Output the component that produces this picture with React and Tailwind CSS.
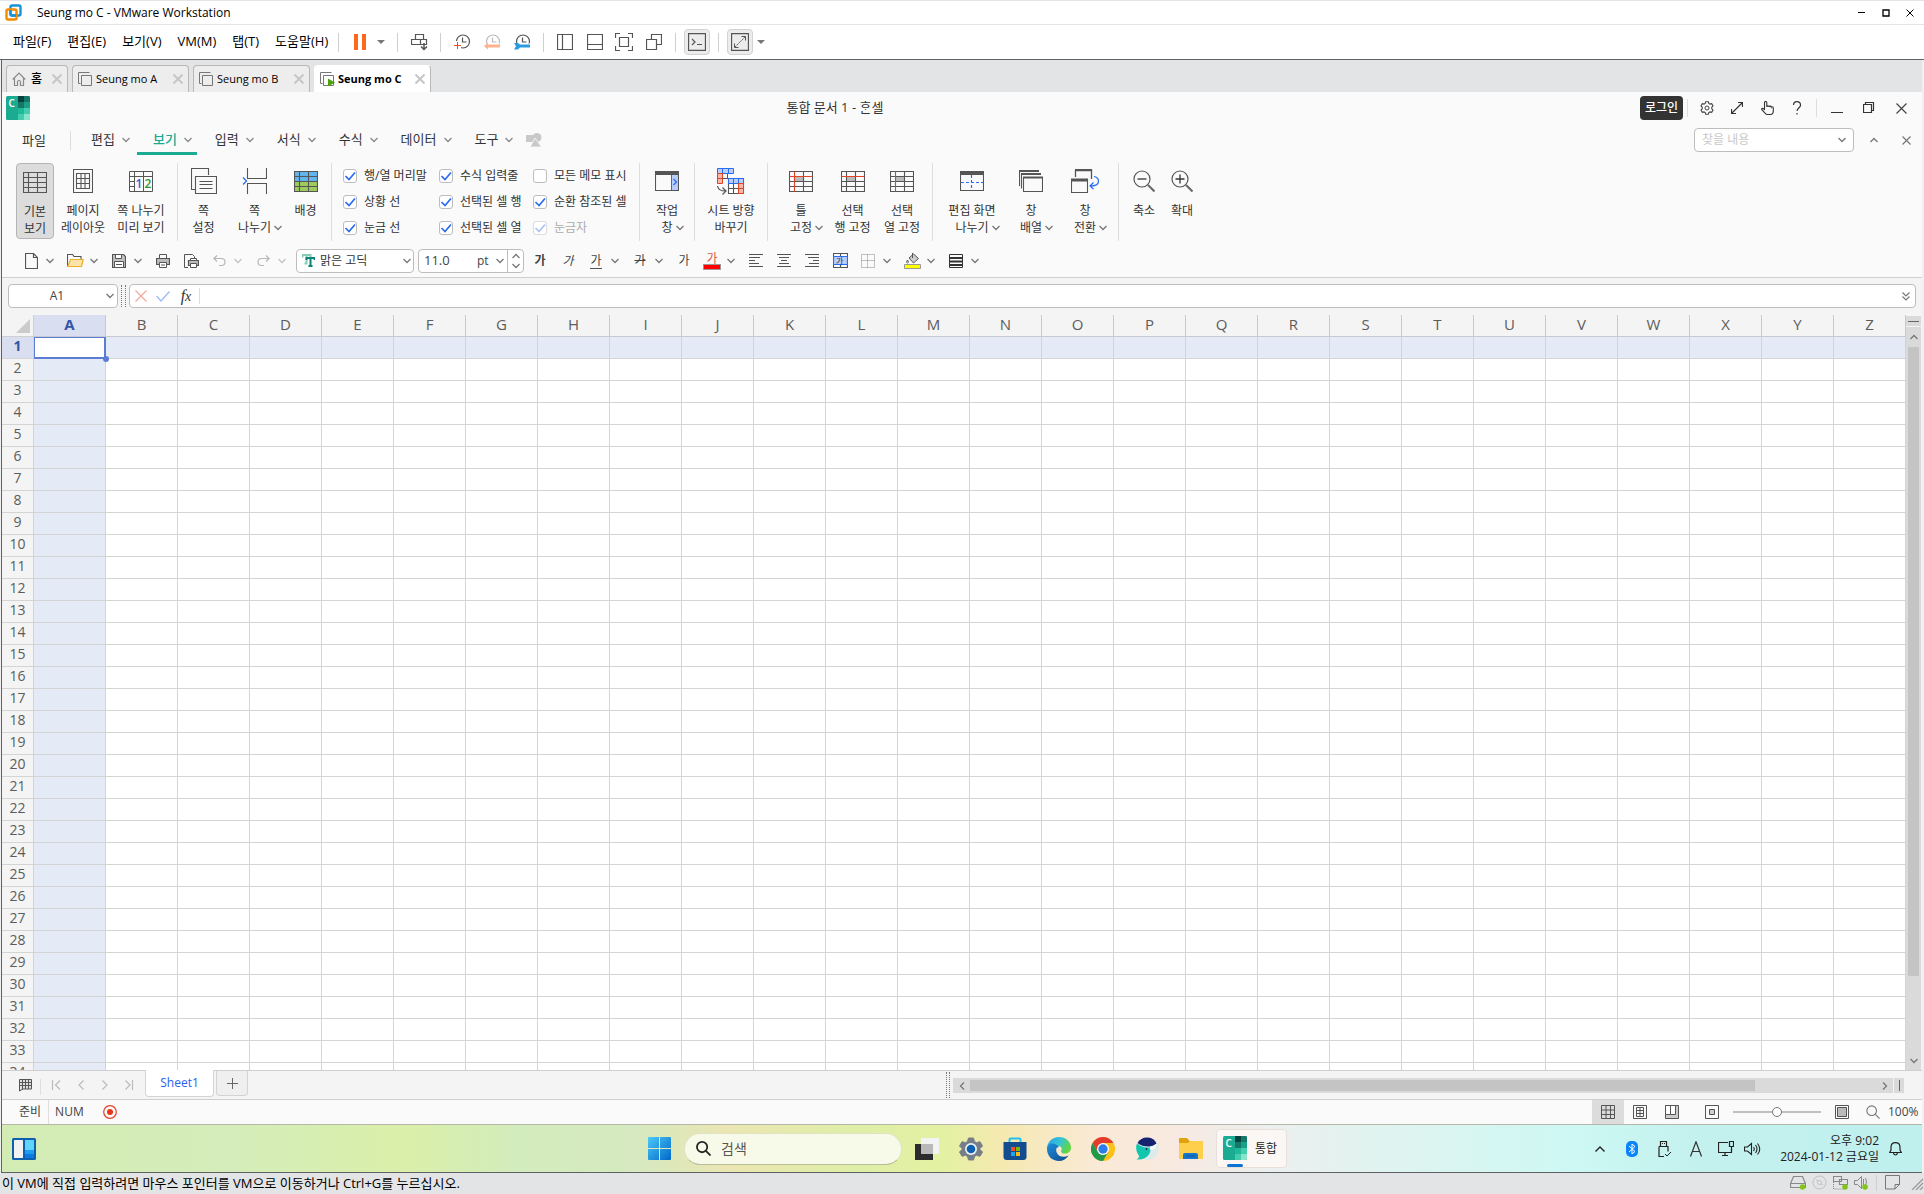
import { useState } from 'react';
import clsx from 'clsx';

const COLUMNS = 'ABCDEFGHIJKLMNOPQRSTUVWXYZ'.split('');
const ROWS = Array.from({ length: 34 }, (_, i) => i + 1);

/* ---------- shared bits ---------- */

const Svg = ({ w, h, className, children, stroke = '#555' }) => (
  <svg
    width={w}
    height={h}
    viewBox={`0 0 ${w} ${h}`}
    fill="none"
    stroke={stroke}
    className={clsx('shrink-0', className)}
    aria-hidden="true"
  >
    {children}
  </svg>
);

const Chevron = ({ className, up }) => (
  <svg width="10" height="8" viewBox="0 0 10 8" fill="none" stroke="currentColor" strokeWidth="1.3" className={clsx('shrink-0', className)} aria-hidden="true">
    <path d={up ? 'M1.5 6 5 2.5 8.5 6' : 'M1.5 2 5 5.5 8.5 2'} />
  </svg>
);

const Caret = () => (
  <Svg w={8} h={4} stroke="none"><path d="M0 0h8L4 4z" fill="#777" /></Svg>
);

const Cross = ({ size = 10, className, color = '#444', width = 1.2 }) => (
  <Svg w={size} h={size} className={className} stroke={color}>
    <path d={`M.5.5l${size - 1} ${size - 1}M${size - 0.5} .5l-${size - 1} ${size - 1}`} strokeWidth={width} />
  </Svg>
);

const Magnifier = ({ size = 16, color = '#777', width = 1.3 }) => (
  <svg width={size} height={size} viewBox="0 0 16 16" fill="none" stroke={color} strokeWidth={width} className="shrink-0" aria-hidden="true">
    <circle cx="6.5" cy="6.5" r="5.5" />
    <path d="m10.5 10.5 5 5" />
  </svg>
);

const CellLogo = () => (
  <Svg w={24} h={24} stroke="none">
    <rect width="24" height="24" rx="1.5" fill="#1bab90" />
    <path d="M12 0h6v6h-6z" fill="#08423f" />
    <path d="M18 0h4.500a1.500 1.500 0 0 1 1.500 1.500V6h-6zM12 6h6v6h-6z" fill="#147767" />
    <path d="M18 6h6v6h-6z" fill="#1b9f86" />
    <path d="M12 12h6v6h-6z" fill="#1fb898" />
    <path d="M18 12h6v6h-6zM12 18h6v6h-6z" fill="#42cdac" />
    <path d="M18 18h6v4.500a1.500 1.500 0 0 1-1.500 1.500H18z" fill="#8ce3cc" />
    <text x="2.500" y="11" fontSize="10" fontWeight="600" fill="#fff" fontFamily="Open Sans">C</text>
  </Svg>
);

/* ---------- workstation chrome ---------- */

const TitleBar = () => (
  <header className="flex h-[25px] shrink-0 items-center border-y border-[#e4e4e4] bg-white pl-[5px] pr-[10px]">
    <Svg w={17} h={17}>
      <rect x="5.500" y="1.500" width="10" height="10" rx="1.500" stroke="#1a93d6" strokeWidth="2.400" />
      <rect x="1.500" y="5.500" width="10" height="10" rx="1.500" stroke="#f38b00" strokeWidth="2.400" />
      <path d="M5.500 6v3.500q0 2 2 2H11" stroke="#1a93d6" strokeWidth="2.400" />
    </Svg>
    <h1 className="ml-[15px] flex-1 text-xs">Seung mo C - VMware Workstation</h1>
    <div className="flex items-center gap-4">
      <button type="button" aria-label="최소화" className="flex h-5 w-2 items-center"><Svg w={8} h={8} stroke="#000"><path d="M0 3.500h7" /></Svg></button>
      <button type="button" aria-label="최대화" className="flex h-5 w-2 items-center"><Svg w={8} h={8} stroke="#000"><path d="M1 1h6v6H1z" strokeWidth="1.300" /></Svg></button>
      <button type="button" aria-label="닫기" className="flex h-5 w-2 items-center"><Cross size={8} color="#000" width={1} /></button>
    </div>
  </header>
);

const Clock = ({ stroke }) => (
  <>
    <circle cx="9" cy="7.500" r="6.500" stroke={stroke} strokeWidth="1.200" />
    <path d="M8.500 3.500v4.500h4" stroke={stroke} strokeWidth="1.200" />
  </>
);

const Divider = ({ className }) => <span className={clsx('w-px bg-[#cfcfcf]', className)} />;

const ToolButton = ({ label, className, children }) => (
  <button type="button" aria-label={label} className={clsx('flex h-[26px] items-center justify-center', className)}>
    {children}
  </button>
);

const VmToolbar = () => (
  <nav className="flex h-[35px] shrink-0 items-center border-b border-[#5f6164] bg-white pl-[13px]">
    <div className="flex gap-4 text-[13px]">
      {['파일(F)', '편집(E)', '보기(V)', 'VM(M)', '탭(T)', '도움말(H)'].map((m) => (
        <button type="button" key={m}>{m}</button>
      ))}
    </div>
    <Divider className="ml-[10px] h-[19px]" />
    <ToolButton label="일시 중지" className="ml-[14px] w-[14px]">
      <Svg w={13} h={16} stroke="none"><path d="M0 0h4v16H0zM8 0h4v16H8z" fill="#ff6a1a" /></Svg>
    </ToolButton>
    <ToolButton label="전원 메뉴" className="ml-[10px] w-2"><Caret /></ToolButton>
    <Divider className="ml-3 h-[19px]" />
    <ToolButton label="Ctrl+Alt+Del 보내기" className="ml-[13px] w-4">
      <Svg w={17} h={17}><path d="M4.500.500h8v5h-8zM.500 5.500h9v5h-9zM9.500 5.500h6v5h-6z" strokeWidth="1.200" /><path d="M13 9v6M10 12.500l3 3 3-3" strokeWidth="1.500" /></Svg>
    </ToolButton>
    <Divider className="ml-[13px] h-[19px]" />
    <ToolButton label="스냅샷 만들기" className="ml-3 w-[18px]">
      <Svg w={17} h={16}><Clock stroke="#555" /><path d="M0 7h7v9H0z" fill="#fff" stroke="none" /><path d="M3.500 8v7M0 11.500h7" stroke="#e8501f" /></Svg>
    </ToolButton>
    <ToolButton label="스냅샷 되돌리기" className="ml-3 w-[18px]">
      <Svg w={17} h={16}><Clock stroke="#bbb" /><path d="M0 9.500h17V16H0z" fill="#fff" stroke="none" /><path d="M0 12 4 8.500v2h12v3H4v2z" fill="#ffb28e" stroke="none" /></Svg>
    </ToolButton>
    <ToolButton label="스냅샷 관리자" className="ml-3 w-[18px]">
      <Svg w={17} h={16}><Clock stroke="#555" /><path d="M0 9.500h17V16H0z" fill="#fff" stroke="none" /><path d="M0 9h4l2 1.500h10v3H6L4 15.500H0l2-3.200z" fill="#2a9be0" stroke="none" /></Svg>
    </ToolButton>
    <Divider className="ml-3 h-[19px]" />
    <ToolButton label="라이브러리" className="ml-[13px] w-4"><Svg w={16} h={16}><path d="M.500.500h15v15H.500zM5.500.500v15" strokeWidth="1.200" /></Svg></ToolButton>
    <ToolButton label="썸네일 바" className="ml-[14px] w-4"><Svg w={16} h={16}><path d="M.500.500h15v15H.500zM.500 10.500h15" strokeWidth="1.200" /></Svg></ToolButton>
    <ToolButton label="전체 화면" className="ml-3 w-[18px]"><Svg w={18} h={18}><path d="M.500 5V.500H5M13 .500h4.500V5M17.500 13v4.500H13M5 17.500H.500V13M4.500 4.500h9v9h-9z" strokeWidth="1.200" /></Svg></ToolButton>
    <ToolButton label="유니티" className="ml-3 w-[18px]"><Svg w={16} h={16}><path d="M5.500 5V.500h10v10H11M.500 5.500h10v10H.500z" strokeWidth="1.200" /></Svg></ToolButton>
    <Divider className="ml-3 h-[19px]" />
    <ToolButton label="콘솔" className="ml-2 w-[26px] rounded border border-[#d2d2d2] bg-[#ececed]">
      <Svg w={18} h={18}><path d="M.500.500h17v17H.500z" strokeWidth="1.300" /><path d="M4 6l3 3-3 3M9 11.500h5" strokeWidth="1.200" /></Svg>
    </ToolButton>
    <Divider className="ml-2 h-[19px]" />
    <ToolButton label="화면 맞춤" className="ml-2 w-[26px] rounded border border-[#d2d2d2] bg-[#ececed]">
      <Svg w={18} h={18}><path d="M.500.500h17v17H.500z" strokeWidth="1.300" /><path d="M10.500 3.500h4v4M3.500 10.500v4h4" /><path d="m4 14 10-10" strokeDasharray="2 1" /></Svg>
    </ToolButton>
    <ToolButton label="화면 맞춤 메뉴" className="ml-1 w-2"><Caret /></ToolButton>
  </nav>
);

const VmGlyph = ({ running }) => (
  <Svg w={15} h={14} stroke="#777">
    <path d="M11.500.500h-11v11h2M3.500 3.500h10v10h-10z" />
    {running && <path d="M8 6.500v8l7-4z" fill="#4ca30d" stroke="none" />}
  </Svg>
);

const VmTab = ({ name, active }) => (
  <div
    className={clsx(
      'flex h-[27px] w-[117px] items-center rounded-t border border-b-0 px-[5px] text-[11px]',
      active ? 'border-white border-r-[#b8b8b8] bg-white font-bold' : 'border-[#b8b8b8] bg-[#ededee]'
    )}
  >
    <VmGlyph running={active} />
    <span className="ml-[3px] flex-1 whitespace-nowrap">{name}</span>
    <button type="button" aria-label={`${name} 닫기`}><Cross size={10} color="#c6c6c6" width={2} /></button>
  </div>
);

const VmTabs = () => (
  <div className="flex h-8 shrink-0 items-end gap-1 bg-[#e3e4e6] pl-1">
    <div className="flex h-[27px] w-[62px] items-center rounded-t border border-b-0 border-[#b8b8b8] bg-[#ededee] px-[5px] text-xs font-medium">
      <Svg w={14} h={14} stroke="#888"><path d="M.700 7.500 7 1l6.300 6.500M2.500 6.500v7h3v-4q1.500-2.500 3 0v4h3v-7" strokeWidth="1.200" /></Svg>
      <span className="ml-[5px] flex-1">홈</span>
      <button type="button" aria-label="홈 닫기"><Cross size={10} color="#c6c6c6" width={2} /></button>
    </div>
    <VmTab name="Seung mo A" />
    <VmTab name="Seung mo B" />
    <VmTab name="Seung mo C" active />
  </div>
);

/* ---------- spreadsheet header ---------- */

const AppTitle = () => (
  <div className="flex h-8 shrink-0 items-center pl-1 pr-[5px]">
    <CellLogo />
    <h2 className="flex-1 text-center text-[13px] text-[#333]">통합 문서 1 - {'\u1112\u119e\u11ab'}셀</h2>
    <button type="button" className="h-6 rounded bg-[#333] px-[5px] text-xs font-medium text-white">로그인</button>
    <Divider className="ml-1 h-[18px] bg-[#dedede]" />
    <div className="ml-1 flex">
      <ToolButton label="설정" className="w-[30px]">
        <Svg w={14} h={14} stroke="#444">
          <path d="M5.700.700h2.600l.5 1.700 1.200.7 1.700-.4 1.300 2.200-1.200 1.300v1.600l1.200 1.300-1.300 2.200-1.700-.4-1.200.7-.5 1.700H5.700l-.5-1.700-1.200-.7-1.700.4L1 9.100l1.200-1.300V6.200L1 4.900l1.300-2.200 1.700.4 1.200-.7z" strokeWidth="1.100" />
          <circle cx="7" cy="7" r="2" />
        </Svg>
      </ToolButton>
      <ToolButton label="전체 화면" className="w-[30px]"><Svg w={12} h={12} stroke="#333"><path d="M.500 11.500l11-11M7 .500h4.500V5M.500 7v4.500H5" strokeWidth="1.200" /></Svg></ToolButton>
      <ToolButton label="터치 모드" className="w-[30px]"><Svg w={13} h={14} stroke="#333"><path d="M3.500 9V1.800q0-1.300 1.100-1.300t1.200 1.300V6q.2-1.200 1.200-1.100 1 0 1.100 1 .2-.8 1.100-.8t1.100 1q.2-.5 1-.4 1 .1 1 1.200V10q0 3.500-3 3.500H6.500Q5 13.500 4 12L.700 8.500q-.3-1 .8-1.200Q2.600 7.300 3.500 9" strokeWidth="1.100" /></Svg></ToolButton>
      <ToolButton label="도움말" className="w-[30px]"><Svg w={10} h={14} stroke="#333"><path d="M1.500 4Q1.600.700 5 .700T8.500 4Q8.500 5.500 7 6.700T5 9.800M5 12v1.500" strokeWidth="1.200" /></Svg></ToolButton>
    </div>
    <Divider className="ml-1 h-[18px] bg-[#dedede]" />
    <div className="ml-1 flex">
      <ToolButton label="최소화" className="w-8"><Svg w={12} h={12} stroke="#333"><path d="M0 10.500h12" /></Svg></ToolButton>
      <ToolButton label="이전 크기로" className="w-8"><Svg w={12} h={12} stroke="#333"><path d="M.500 2.500h8v8h-8zM2.500 2.500v-2h8v8h-2" strokeWidth="1.200" /></Svg></ToolButton>
      <ToolButton label="닫기" className="w-8"><Cross size={11} /></ToolButton>
    </div>
  </div>
);

const MenuBar = () => (
  <div className="flex h-8 shrink-0 items-center pl-5 text-[13px] text-[#333]">
    <button type="button" className="w-12 pt-px text-left">파일</button>
    <Divider className="mr-1 h-[19px] bg-[#dedede]" />
    <div className="flex gap-[2px] self-stretch">
      {['편집', '보기', '입력', '서식', '수식', '데이터', '도구'].map((m) => (
        <button
          type="button"
          key={m}
          className={clsx(
            'flex h-[31px] items-center gap-1.5 border-b-[3px] pl-4 pr-1 pt-1',
            m === '보기' ? 'border-[#1bab90] font-medium text-[#1bab90]' : 'border-transparent'
          )}
        >
          {m}
          <Chevron className="text-[#888]" />
        </button>
      ))}
    </div>
    <Svg w={16} h={14} className="ml-2" stroke="none">
      <path d="M0 2h7v7H0z" fill="#c9c9c9" /><circle cx="11" cy="4.500" r="4.500" fill="#c9c9c9" /><path d="M9 5l6.500 9H4z" fill="#c9c9c9" stroke="#fafafa" strokeWidth=".8" />
    </Svg>
    <label className="ml-auto flex h-6 w-[160px] items-center rounded border border-[#bdbdbd] bg-white pr-1.5">
      <input type="text" aria-label="찾을 내용" placeholder="찾을 내용" className="min-w-0 flex-1 pl-[7px] text-xs outline-none placeholder:text-[#c8c8c8]" />
      <Chevron className="text-[#777]" />
    </label>
    <ToolButton label="리본 접기" className="ml-1 w-8 text-[#777]"><Chevron up /></ToolButton>
    <ToolButton label="문서 닫기" className="w-8"><Cross size={9} color="#777" /></ToolButton>
  </div>
);

/* ---------- ribbon ---------- */

const GridLines = ({ head = 'none', body = 'none' }) => (
  <>
    <path d="M.500.500h23v10H.500z" fill={head} stroke="none" />
    <path d="M.500 10.500h23v10H.500z" fill={body} stroke="none" />
    <path d="M.500.500h23v20H.500zM5.500.500v20M14.500.500v20M.500 5.500h23M.500 10.500h23M.500 15.500h23" strokeWidth="1.100" />
  </>
);

const NormalIcon = () => <Svg w={24} h={21}><GridLines /></Svg>;
const BackgroundIcon = () => <Svg w={24} h={21}><GridLines head="#63b5ee" body="#9dcb5c" /></Svg>;

const FreezeIcon = ({ row, col }) => (
  <Svg w={24} h={21}>
    <path d="M5.500 5.500h9v5h-9z" fill="#bbb" stroke="none" />
    <GridLines />
    {row && <path d="M.500 5.500h23" stroke="#e04326" />}
    {col && <path d="M5.500.500v20" stroke="#e04326" />}
  </Svg>
);

const PageLayoutIcon = () => (
  <Svg w={20} h={24}><path d="M.500.500h19v23H.500zM3.500 4.500h13v15h-13zM8 4.500v15M12 4.500v15M3.500 9.500h13M3.500 14.500h13" strokeWidth="1.100" /></Svg>
);

const PageBreakIcon = () => (
  <Svg w={24} h={21}>
    <path d="M.500.500h23v20H.500zM5.500.500v20M14.500.500v20M.500 5.500h23M.500 10.500h5M.500 15.500h5" />
    <path d="M6 6h8v14H6zM15 6h8v14h-8z" fill="#fafafa" stroke="none" />
    <text x="6.500" y="17" fontSize="12" fill="#2a62e0" stroke="none" fontFamily="Open Sans" fontWeight="600">1</text>
    <text x="15.500" y="17" fontSize="12" fill="#2b9a2b" stroke="none" fontFamily="Open Sans" fontWeight="600">2</text>
  </Svg>
);

const PageSetupIcon = () => (
  <Svg w={26} h={26}><path d="M4 21.500H.500V.500h17V7M4.500 8.500h21v17h-21zM8.500 13.500h13M8.500 16.500h13M8.500 20.500h13" strokeWidth="1.100" /></Svg>
);

const SplitPageIcon = () => (
  <Svg w={25} h={26}><path d="M5.500 0v10.500h19V0M5.500 26V15.500h19V26" strokeWidth="1.100" /><path d="m1 9.500 3.500 3.500L1 16.500" stroke="#2a6cf0" strokeWidth="1.300" /></Svg>
);

const TaskPaneIcon = () => (
  <Svg w={24} h={20}>
    <path d="M16 4h7.500v15.500H16z" fill="#b9cdf8" stroke="none" /><path d="M.500 2.500h23v17H.500z" strokeWidth="1.100" /><path d="M0 2h24" strokeWidth="4" />
    <path d="M16.500 4v15" stroke="#2a6cf0" /><path d="m18.500 8 3 3-3 3" stroke="#2a6cf0" strokeWidth="1.300" />
  </Svg>
);

const SheetDirectionIcon = () => (
  <Svg w={28} h={27}>
    <path d="M.500.500h16v5H.500z" fill="#b9cdf8" stroke="#2a6cf0" /><path d="M5.500.500v5M11.500.500v5" stroke="#2a6cf0" />
    <path d="M.500 5.500h5v10h-5zM.500 10.500h5" fill="#f5b8ab" stroke="#e04326" />
    <path d="M5.500 10.500h5M10.500 6v5" />
    <path d="M11.500 10.500h15v15h-15zM16.500 15v11M11.500 20.500h15" fill="#fff" strokeWidth="1.100" />
    <path d="M11.500 10.500h15v5h-15z" fill="#b9cdf8" stroke="#2a6cf0" /><path d="M16.500 10.500v5M21.500 10.500v5" stroke="#2a6cf0" />
    <path d="M21.500 15.500h5v10h-5zM21.500 20.500h5" fill="#f5b8ab" stroke="#e04326" />
    <path d="M.500 18q1 5 8 5M5.500 19.500l3.500 3.500-3.500 3.500" strokeWidth="1.200" />
  </Svg>
);

const SplitViewIcon = () => (
  <Svg w={24} h={20}><path d="M.500 2.500h23v17H.500z" strokeWidth="1.100" /><path d="M0 2h24" strokeWidth="4" /><path d="M11.500 4v15M1 11.500h22" stroke="#2a6cf0" strokeDasharray="3 2" strokeWidth="1.200" /></Svg>
);

const ArrangeIcon = () => (
  <Svg w={24} h={22}><path d="M.500 16V.500H20M2.500 18.500V3.500h19M4.500 7.500h19v14h-19z" strokeWidth="1.100" /><path d="M0 1h20M2 4h20M4 7.500h20" strokeWidth="2" /></Svg>
);

const SwitchWindowIcon = () => (
  <Svg w={28} h={24}>
    <path d="M4.500 8V1M4 1h17M20.500 0v10" strokeWidth="1.300" /><path d="M4 1h17" strokeWidth="2.500" />
    <path d="M.500 10.500h16v13H.500z" strokeWidth="1.100" /><path d="M0 11h17" strokeWidth="3" />
    <path d="M23 7.500q4.500 1 4.500 4.500 0 5-8 5M22.500 13.500l-3.500 3.500 3.500 3" stroke="#2a6cf0" strokeWidth="1.200" />
  </Svg>
);

const ZoomIcon = ({ plus }) => (
  <Svg w={22} h={22}><circle cx="9" cy="9" r="8" strokeWidth="1.200" /><path d={plus ? 'M4.500 9h9M9 4.500v9' : 'M4.500 9h9'} stroke="#333" strokeWidth="1.300" /><path d="m15 15 6.500 6.500" stroke="#666" strokeWidth="2" /></Svg>
);

const RibbonButton = ({ icon, lines, menu, active, className }) => (
  <button
    type="button"
    className={clsx('flex h-[76px] shrink-0 flex-col items-center rounded pt-1 text-xs/[17px] text-[#333]', active && 'border border-[#b5b5b5] bg-[#dcdcdc]', className)}
  >
    <span className="flex h-7 shrink-0 items-center">{icon}</span>
    <span className="mt-[7px] whitespace-nowrap">{lines[0]}</span>
    {lines[1] && (
      <span className={clsx('flex items-center whitespace-nowrap', menu && 'pl-3')}>
        {lines[1]}
        {menu && <Chevron className="ml-[2px] text-[#777]" />}
      </span>
    )}
  </button>
);

const CheckItem = ({ label, defaultChecked = true, disabled }) => (
  <label className={clsx('flex items-center gap-[7px] whitespace-nowrap text-xs', disabled ? 'text-[#ababab]' : 'text-[#333]')}>
    <span className="grid">
      <input
        type="checkbox"
        defaultChecked={defaultChecked}
        disabled={disabled}
        className="peer col-start-1 row-start-1 h-[14px] w-[14px] appearance-none rounded-[3px] border border-[#bdbdbd] bg-white disabled:border-[#dcdcdc]"
      />
      <Svg w={14} h={14} stroke={disabled ? '#a9c2f5' : '#2a6cf0'} className="pointer-events-none invisible col-start-1 row-start-1 peer-checked:visible">
        <path d="m2.500 7 3.500 3.500 6-7" strokeWidth="1.700" />
      </Svg>
    </span>
    {label}
  </label>
);

const RibbonDivider = ({ className }) => <Divider className={clsx('h-[78px] shrink-0 bg-[#dedede]', className)} />;

const Ribbon = () => (
  <div className="flex h-[88px] shrink-0 items-start overflow-hidden pl-[14px] pt-[7px]">
    <RibbonButton icon={<NormalIcon />} lines={['기본', '보기']} active className="w-[38px]" />
    <RibbonButton icon={<PageLayoutIcon />} lines={['페이지', '레이아웃']} className="w-[58px]" />
    <RibbonButton icon={<PageBreakIcon />} lines={['쪽 나누기', '미리 보기']} className="w-[58px]" />
    <RibbonDivider className="ml-[7px]" />
    <RibbonButton icon={<PageSetupIcon />} lines={['쪽', '설정']} className="w-[51px]" />
    <RibbonButton icon={<SplitPageIcon />} lines={['쪽', '나누기']} menu className="w-[51px]" />
    <RibbonButton icon={<BackgroundIcon />} lines={['배경']} className="w-[51px]" />
    <RibbonDivider />
    <div className="grid h-[78px] shrink-0 grid-cols-[96px_94px_106px] pl-[11px]">
      <CheckItem label="행/열 머리말" />
      <CheckItem label="수식 입력줄" />
      <CheckItem label="모든 메모 표시" defaultChecked={false} />
      <CheckItem label="상황 선" />
      <CheckItem label="선택된 셀 행" />
      <CheckItem label="순환 참조된 셀" />
      <CheckItem label="눈금 선" />
      <CheckItem label="선택된 셀 열" />
      <CheckItem label="눈금자" disabled />
    </div>
    <RibbonDivider />
    <RibbonButton icon={<TaskPaneIcon />} lines={['작업', '창']} menu className="w-[54px]" />
    <RibbonDivider />
    <RibbonButton icon={<SheetDirectionIcon />} lines={['시트 방향', '바꾸기']} className="w-[72px]" />
    <RibbonDivider />
    <RibbonButton icon={<FreezeIcon row col />} lines={['틀', '고정']} menu className="ml-[7px] w-[52px]" />
    <RibbonButton icon={<FreezeIcon row />} lines={['선택', '행 고정']} className="w-[51px]" />
    <RibbonButton icon={<FreezeIcon col />} lines={['선택', '열 고정']} className="w-[48px]" />
    <RibbonDivider className="ml-[6px]" />
    <RibbonButton icon={<SplitViewIcon />} lines={['편집 화면', '나누기']} menu className="ml-[7px] w-[64px]" />
    <RibbonButton icon={<ArrangeIcon />} lines={['창', '배열']} menu className="w-[54px]" />
    <RibbonButton icon={<SwitchWindowIcon />} lines={['창', '전환']} menu className="w-[54px]" />
    <RibbonDivider className="ml-[6px]" />
    <RibbonButton icon={<ZoomIcon />} lines={['축소']} className="ml-[6px] w-[38px]" />
    <RibbonButton icon={<ZoomIcon plus />} lines={['확대']} className="w-[38px]" />
  </div>
);

/* ---------- formatting bar ---------- */

const Quick = ({ label, menu, faded, children }) => (
  <div className={clsx('flex shrink-0 items-center', faded && 'opacity-40')}>
    <ToolButton label={label} className="w-7">{children}</ToolButton>
    {menu && (
      <ToolButton label={`${label} 메뉴`} className="w-4 text-[#777]"><Chevron className="mr-auto" /></ToolButton>
    )}
  </div>
);

const AlignIcon = ({ d }) => <Svg w={14} h={14}><path d={d} strokeWidth="1.100" /></Svg>;

const FormatBar = () => (
  <div className="flex h-[34px] shrink-0 items-center overflow-hidden border-b border-[#cfcfcf] pl-[15px] text-xs text-[#444]">
    <Quick label="새 문서" menu><Svg w={13} h={16}><path d="M.500.500h8l4 4v11H.500zM8.500.500v4h4" strokeWidth="1.200" /></Svg></Quick>
    <Quick label="열기" menu>
      <Svg w={17} h={13}><path d="M.500 12V.500h5l1.500 2h7V6" strokeWidth="1.100" /><path d="M3.500 5.500h12.700l-1.700 7H.700z" fill="#fde3a7" stroke="#eab128" strokeWidth="1.200" /></Svg>
    </Quick>
    <Quick label="저장" menu>
      <Svg w={14} h={14}><path d="M.500.500h11l2 2v11H.500z" fill="#c2c2c2" strokeWidth="1.200" /><path d="M3.500.500h6v4h-6zM2.500 7.500h9v6h-9z" fill="#fff" /><path d="M4 10.500h6" /></Svg>
    </Quick>
    <Quick label="인쇄">
      <Svg w={14} h={14}><path d="M3.500 4V.500h7V4" /><path d="M.500 4.500h13v6H.500z" fill="#bbb" strokeWidth="1.200" /><path d="M3.500 8.500h7v5h-7z" fill="#fff" /><path d="M5 11h4" /></Svg>
    </Quick>
    <Quick label="미리 보기">
      <Svg w={15} h={14}><path d="M4 13.500H.500V.500h8l2 2V4" /><path d="M4.500 6.500h10v5h-10z" fill="#bbb" strokeWidth="1.200" /><path d="M6.500 4.500h6v2h-6zM6.500 9.500h6v4h-6z" fill="#fff" /></Svg>
    </Quick>
    <Quick label="되돌리기" menu faded><Svg w={13} h={12}><path d="M4 .500.800 3.500 4 6.500M1 3.500h7.500q3.500 0 3.500 3.500t-3.500 3.500H6" strokeWidth="1.200" /></Svg></Quick>
    <Quick label="다시 실행" menu faded><Svg w={13} h={12}><path d="m9 .500 3.200 3L9 6.500M12 3.500H4.500Q1 3.500 1 7t3.500 3.500H7" strokeWidth="1.200" /></Svg></Quick>
    <label className="ml-[3px] flex h-6 w-[118px] shrink-0 items-center rounded border border-[#bdbdbd] bg-white px-[5px]">
      <Svg w={13} h={13}><path d="M.500 3.500V1h8v2.500M4.500 1v8M2.500 9.500h3" stroke="#85cdb8" strokeWidth="2" /><path d="M4.500 6V4h8v2M8.500 4v8M6.500 12h4" stroke="#0c8378" strokeWidth="2" /></Svg>
      <select aria-label="글꼴" className="min-w-0 flex-1 appearance-none pl-[5px] text-[#333] outline-none">
        <option>맑은 고딕</option>
      </select>
      <Chevron className="-mr-1 text-[#777]" />
    </label>
    <div className="ml-1 mr-[2px] flex h-6 w-[106px] shrink-0 items-center rounded border border-[#bdbdbd] bg-white">
      <input type="text" aria-label="글자 크기" defaultValue="11.0" className="w-[58px] pl-[5px] text-[13px] outline-none" />
      <span className="flex-1">pt</span>
      <Chevron className="mr-[2px] text-[#777]" />
      <span className="flex h-full w-4 flex-col items-center justify-between border-l border-[#bdbdbd] py-[2px] text-[#777]">
        <Chevron up />
        <Chevron />
      </span>
    </div>
    <Quick label="진하게"><b>가</b></Quick>
    <Quick label="기울임"><i>가</i></Quick>
    <Quick label="밑줄" menu><span className="border-b border-[#555] leading-[15px]">가</span></Quick>
    <Quick label="취소선" menu><s>가</s></Quick>
    <Quick label="글자 모양">가</Quick>
    <Quick label="글자 색" menu>
      <span className="flex flex-col items-center leading-[12px] text-[#e0523a]">가<span className="h-1 w-4 bg-[#f00] outline-1 outline-[#999]" /></span>
    </Quick>
    <Quick label="왼쪽 정렬"><AlignIcon d="M0 .500h14M0 3.500h11M0 6.500h6M0 9.500h10M0 12.500h14" /></Quick>
    <Quick label="가운데 정렬"><AlignIcon d="M0 .500h14M2 3.500h10M4 6.500h6M2 9.500h10M0 12.500h14" /></Quick>
    <Quick label="오른쪽 정렬"><AlignIcon d="M0 .500h14M3 3.500h11M8 6.500h6M4 9.500h10M0 12.500h14" /></Quick>
    <Quick label="병합하고 가운데 맞춤">
      <Svg w={15} h={15}>
        <path d="M.500.500h14v14H.500zM7.500.500v14" strokeWidth="1.100" /><path d="M.500 3.500h14v8H.500z" fill="#b9cdf8" stroke="#2a6cf0" strokeWidth="1.200" />
        <text x="3" y="10.500" fontSize="8" fill="#333" stroke="none" fontFamily="Noto Sans CJK KR">가</text>
      </Svg>
    </Quick>
    <Quick label="테두리" menu><Svg w={14} h={14} stroke="#888"><path d="M.500.500h13v13H.500zM6.500.500v13M.500 6.500h13" strokeDasharray="1 1" /></Svg></Quick>
    <Quick label="채우기" menu>
      <Svg w={17} h={16}><path d="m5 5 4.500-4 5 4.500-5 4.500z" fill="#ccc" /><path d="M8.500 0v5M3.500 7q-2 3 0 3t0-3" /><path d="M.500 11.500h16v4H.500z" fill="#ff0" stroke="#999" /></Svg>
    </Quick>
    <Quick label="선 종류" menu><Svg w={14} h={14} stroke="#333"><path d="M.500.500h13v13H.500z" /><path d="M0 4h14M0 7.500h14M0 11h14" strokeWidth="2" /></Svg></Quick>
  </div>
);

const FormulaBar = () => (
  <div className="flex h-[37px] shrink-0 items-center bg-[#f4f4f4] pb-px pl-[6px] pr-[6px]">
    <label className="flex h-6 w-[110px] items-center rounded border border-[#bdbdbd] bg-white pr-[2px]">
      <input type="text" aria-label="이름 상자" defaultValue="A1" className="min-w-0 flex-1 text-center text-xs text-[#444] outline-none" />
      <Chevron className="text-[#777]" />
    </label>
    <span className="mx-[3px] h-[22px] w-[5px] border-x border-dotted border-[#777]" />
    <div className="flex h-6 flex-1 items-center rounded border border-[#bdbdbd] bg-white pl-1">
      <ToolButton label="취소" className="w-[14px]"><Cross size={12} color="#f3a99c" /></ToolButton>
      <ToolButton label="입력" className="ml-2 w-[14px]"><Svg w={14} h={11} stroke="#9fbdf7"><path d="m.500 5 4.500 5 8.500-9.500" strokeWidth="1.400" /></Svg></ToolButton>
      <ToolButton label="함수" className="ml-2 w-4">
        <span className="font-['Liberation_Serif',serif] text-base/[20px] italic text-[#333]">f<span className="text-sm">x</span></span>
      </ToolButton>
      <Divider className="ml-[5px] h-4 bg-[#dedede]" />
      <input type="text" aria-label="수식 입력줄" className="min-w-0 flex-1 px-2 text-xs outline-none" />
      <ToolButton label="수식 입력줄 확장" className="w-[18px]"><Svg w={8} h={9} stroke="#777"><path d="m.500.500 3.500 3.500L7.500.500M.500 4.500 4 8l3.500-3.500" strokeWidth="1.200" /></Svg></ToolButton>
    </div>
  </div>
);

/* ---------- sheet ---------- */

const Sheet = () => {
  const [cell, setCell] = useState({ row: 1, col: 'A' });

  return (
    <div className="min-w-0 flex-1 overflow-hidden">
      <table className="w-[1904px] table-fixed border-separate border-spacing-0 font-['Open_Sans',sans-serif]">
        <thead>
          <tr className="h-[22px]">
            <th aria-label="전체 선택" className="w-8 border-b border-r border-[#cfcfcf] bg-[#f4f4f4] p-0">
              <Svg w={14} h={14} className="ml-auto mr-[3px]" stroke="none"><path d="M14 0v14H0z" fill="#cbcbcb" /></Svg>
            </th>
            {COLUMNS.map((c) => (
              <th
                key={c}
                scope="col"
                className={clsx(
                  'w-[72px] border-b border-r border-[#c6c9cf] p-0 pb-[3px] text-[15px]/[18px]',
                  c === cell.col ? 'bg-[#d9dff0] font-bold text-[#3355a4]' : 'bg-[#f4f4f4] font-normal text-[#5c5c5c]'
                )}
              >
                {c}
              </th>
            ))}
          </tr>
        </thead>
        <tbody>
          {ROWS.map((r) => (
            <tr key={r} className="h-[22px]">
              <th
                scope="row"
                className={clsx(
                  'border-b border-r border-[#d4d4d4] p-0 pb-[3px] text-sm/[18px]',
                  r === cell.row ? 'bg-[#d9dff0] font-bold text-[#3355a4]' : 'bg-[#f4f4f4] font-normal text-[#5c5c5c]'
                )}
              >
                {r}
              </th>
              {COLUMNS.map((c) => {
                const selected = r === cell.row && c === cell.col;
                return (
                  <td
                    key={c}
                    onClick={() => setCell({ row: r, col: c })}
                    className={clsx(
                      'relative border-b border-r border-[#d4d4d4] p-0',
                      !selected && (r === cell.row || c === cell.col) ? 'bg-[#e5ebf6]' : 'bg-white'
                    )}
                  >
                    {selected && (
                      <span className="absolute -bottom-px -right-px left-0 top-0 z-10 border border-b-2 border-r-2 border-[#5b7dd3]">
                        <span className="absolute -bottom-[5px] -right-[5px] h-[6px] w-[6px] rounded-full bg-[#5b7dd3]" />
                      </span>
                    )}
                  </td>
                );
              })}
            </tr>
          ))}
        </tbody>
      </table>
    </div>
  );
};

const VerticalScroll = () => (
  <div className="mr-px flex w-[15px] shrink-0 flex-col pt-px text-[#777]">
    <span className="flex h-[10px] items-center justify-center bg-[#dadada]"><span className="h-px w-[11px] bg-[#666]" /></span>
    <div className="mt-px flex min-h-0 flex-1 flex-col items-center bg-[#dadada]">
      <button type="button" aria-label="위로" className="flex h-5 items-center"><Chevron up /></button>
      <span className="w-[11px] flex-[629] bg-[#c4c4c4]" />
      <span className="flex-[76]" />
      <button type="button" aria-label="아래로" className="flex h-[18px] items-center"><Chevron /></button>
    </div>
  </div>
);

const SheetTabs = () => (
  <div className="flex h-[30px] shrink-0 items-start border-y border-[#cfcfcf] bg-[#f4f4f4] pl-[17px] pr-[18px]">
    <Svg w={13} h={13} className="mt-2"><path d="M.500.500h12v9.500H4L.500 12zM.500 3.500h12M.500 6.500h12M3.500.500v10M6.500.500v9.500M9.500.500v9.500" fill="#ddd" /></Svg>
    <Divider className="ml-2 mt-2 h-4 bg-[#dedede]" />
    <div className="mx-1 flex">
      {[
        ['첫 시트', 'M3.500 1v10M11 1.500 6.500 6l4.500 4.500'],
        ['이전 시트', 'M10.500 1.500 6 6l4.500 4.500'],
        ['다음 시트', 'M5.500 1.500 10 6l-4.500 4.500'],
        ['마지막 시트', 'M4.500 1.500 9 6l-4.500 4.500M11.500 1v10'],
      ].map(([label, d]) => (
        <button type="button" key={label} aria-label={label} className="flex h-7 w-6 items-center justify-center">
          <Svg w={16} h={12} stroke="#bbb"><path d={d} strokeWidth="1.200" /></Svg>
        </button>
      ))}
    </div>
    <button type="button" className="-mt-px h-[27px] w-[69px] rounded-b border border-t-0 border-[#d4d4d4] bg-white text-xs font-medium text-[#2a62f0]">Sheet1</button>
    <button type="button" aria-label="시트 추가" className="ml-[2px] flex h-[25px] w-8 items-center justify-center rounded-b border border-t-0 border-[#d4d4d4] bg-[#efefef]">
      <Svg w={11} h={11} stroke="#666"><path d="M5.500 0v11M0 5.500h11" /></Svg>
    </button>
    <div className="ml-auto flex w-[50.8%] self-stretch pt-px">
      <span className="mr-[3px] h-[26px] w-1 border-x border-dotted border-[#777]" />
      <div className="mt-1.5 flex h-[15px] flex-1 items-center bg-[#dadada] text-[#777]">
        <button type="button" aria-label="왼쪽으로" className="flex w-[17px] justify-center"><Chevron className="rotate-90" /></button>
        <span className="h-[11px] flex-[787] bg-[#c4c4c4]" />
        <span className="flex-[121]" />
        <button type="button" aria-label="오른쪽으로" className="flex w-[17px] justify-center"><Chevron className="-rotate-90" /></button>
      </div>
      <span className="ml-px mt-1.5 flex h-[15px] w-[10px] items-center justify-center bg-[#dadada]"><span className="h-[11px] w-px bg-[#666]" /></span>
    </div>
  </div>
);

const StatusBar = () => {
  const [zoom, setZoom] = useState(50);

  return (
    <div className="flex h-[25px] shrink-0 items-center border-b border-[#b5b8a8] bg-[#fafafa] pl-[17px] pr-1 text-xs text-[#444]">
      <span>준비</span>
      <Divider className="ml-[7px] h-full bg-[#dedede]" />
      <span className="ml-[6px]">NUM</span>
      <Svg w={14} h={14} className="ml-[19px]" stroke="#e04326"><circle cx="7" cy="7" r="6.300" strokeWidth="1.200" /><circle cx="7" cy="7" r="3" fill="#e8381a" stroke="none" /></Svg>
      <div className="ml-auto flex h-full items-center">
        <ToolButton label="기본 보기" className="h-full w-8 bg-[#dcdcdc]"><Svg w={14} h={14}><path d="M.500.500h13v13H.500zM5 .500v13M9.500.500v13M.500 5h13M.500 9.500h13" /></Svg></ToolButton>
        <ToolButton label="페이지 레이아웃" className="h-full w-8"><Svg w={14} h={14}><path d="M.500.500h13v13H.500zM3.500 2.500h7v9h-7zM7 2.500v9M3.500 5.500h7M3.500 8.500h7" /></Svg></ToolButton>
        <ToolButton label="쪽 나누기 미리 보기" className="h-full w-8"><Svg w={14} h={14}><path d="M.500.500h13v13H.500z" fill="#ccc" /><path d="M.500.500h5v9h-5zM5.500.500h5v9h-5z" fill="#fff" /></Svg></ToolButton>
        <ToolButton label="선택 영역 확대" className="ml-2 h-full w-8"><Svg w={14} h={14}><path d="M.500.500h13v13H.500z" /><path d="M4.500 4.500h5v5h-5z" fill="#ccc" /></Svg></ToolButton>
        <input
          type="range"
          aria-label="확대/축소"
          value={zoom}
          onChange={(e) => setZoom(Number(e.target.value))}
          className="ml-[5px] h-[2px] w-[88px] appearance-none bg-[#c0c0c0] [&::-webkit-slider-thumb]:h-[10px] [&::-webkit-slider-thumb]:w-[10px] [&::-webkit-slider-thumb]:appearance-none [&::-webkit-slider-thumb]:rounded-full [&::-webkit-slider-thumb]:border [&::-webkit-slider-thumb]:border-[#777] [&::-webkit-slider-thumb]:bg-white"
        />
        <ToolButton label="쪽 맞춤" className="ml-[5px] h-full w-8"><Svg w={14} h={14}><path d="M.500.500h13v13H.500z" /><path d="M2.500 2.500h9v9h-9z" fill="#bbb" /></Svg></ToolButton>
        <ToolButton label="확대" className="h-full w-[30px]"><Magnifier size={14} /></ToolButton>
        <span className="w-[30px] text-right">100%</span>
      </div>
    </div>
  );
};

/* ---------- taskbar ---------- */

const TaskItem = ({ label, children }) => (
  <button type="button" aria-label={label} className="flex h-10 w-11 items-center justify-center">{children}</button>
);

const Taskbar = () => (
  <div className="flex h-[47px] shrink-0 items-center bg-[linear-gradient(90deg,#d3ecb4_0%,#d5edba_12%,#daefa9_21%,#d3ecbd_27%,#d6e9c0_33%,#ebe6b2_38%,#dfeea8_44%,#e3f1a3_49%,#f5e9b0_52%,#fae9d6_57%,#f8e9e0_61%,#ecf0ef_66%,#def4f0_73%,#cdf8f4_82%,#c4f1ee_88%,#bff0ee_100%)]">
    <div className="flex flex-1 px-[10px]">
      <button type="button" aria-label="위젯">
        <Svg w={24} h={22} stroke="none">
          <rect width="24" height="22" rx="1.500" fill="#0f5fb0" /><rect x="2" y="2" width="9" height="18" rx=".5" fill="#f2f2f2" />
          <path d="M13 2h9v10h-9z" fill="#62d3fb" /><path d="M13 12h9v4h-9z" fill="#1f9df3" /><path d="M13 16h9v4h-9z" fill="#0b7ae0" />
        </Svg>
      </button>
    </div>
    <div className="flex items-center">
      <TaskItem label="시작">
        <Svg w={23} h={23} stroke="none">
          <defs><linearGradient id="win" x1="0" y1="0" x2="1" y2="1"><stop stopColor="#4cc9f8" /><stop offset="1" stopColor="#0067c8" /></linearGradient></defs>
          <path d="M1 0h10v11H0V1q0-1 1-1zM12 0h10q1 0 1 1v10H12zM0 12h11v11H1q-1 0-1-1zM12 12h11v10q0 1-1 1H12z" fill="url(#win)" />
        </Svg>
      </TaskItem>
      <label className="mx-[3px] flex h-8 w-[218px] items-center rounded-full border border-b-[#b9bd98] border-[#dfe3c4] bg-[#f8fae9] pl-[11px]">
        <Magnifier size={15} color="#222" width={1.9} />
        <input type="text" aria-label="검색" placeholder="검색" className="ml-[10px] min-w-0 flex-1 text-sm outline-none placeholder:text-[#555]" />
      </label>
      <TaskItem label="작업 보기">
        <Svg w={24} h={22} stroke="none">
          <path d="M0 6h18v16H0z" fill="#2c2c2c" /><path d="M6 0h18v16H6z" fill="#f3f3f3" /><path d="M6 6h12v10H6z" fill="#b9b9b9" />
        </Svg>
      </TaskItem>
      <TaskItem label="설정">
        <Svg w={24} h={24} stroke="none">
          <path d="M9.500 1h5l1 3.500 2 1.200 3.500-1 2.500 4.300-2.500 2.500v1l2.500 2.500-2.500 4.300-3.500-1-2 1.200-1 3.500h-5l-1-3.500-2-1.200-3.500 1L.500 15 3 12.500v-1L.500 9 3 4.700l3.500 1 2-1.200z" fill="#767f87" stroke="#767f87" strokeLinejoin="round" />
          <circle cx="12" cy="12" r="6" fill="#eef1f3" /><circle cx="12" cy="12" r="4.300" fill="#0f5fb3" />
        </Svg>
      </TaskItem>
      <TaskItem label="스토어">
        <Svg w={24} h={24} stroke="none">
          <path d="M6.500 6V2.500q0-1 1-1h9q1 0 1 1V6" stroke="#25c0f2" strokeWidth="2" fill="none" />
          <path d="M.500 5h23v15q0 3-3 3h-17q-3 0-3-3z" fill="#144d8f" />
          <path d="M8 10h4v4H8z" fill="#f2512a" /><path d="M13 10h4v4h-4z" fill="#7fb900" /><path d="M8 15h4v4H8z" fill="#18a4ee" /><path d="M13 15h4v4h-4z" fill="#fdb813" />
        </Svg>
      </TaskItem>
      <TaskItem label="Edge">
        <Svg w={24} h={24} stroke="none">
          <defs>
            <linearGradient id="edgeA" x1="0" y1="0" x2="1" y2=".4"><stop stopColor="#2f9fe0" /><stop offset=".55" stopColor="#35c3da" /><stop offset="1" stopColor="#62d544" /></linearGradient>
            <linearGradient id="edgeB" x1="0" y1="0" x2="1" y2="1"><stop stopColor="#1b8fdd" /><stop offset="1" stopColor="#114a8b" /></linearGradient>
          </defs>
          <path d="M0 12C0 5 5 0 12 0s12 5 12 10.500c0 4-3 6-6 6-4 0-4.500-2-3.500-3.500S14 9 11 9s-5 3-5 7z" fill="url(#edgeA)" />
          <path d="M0 12c0-5 5-6.500 8-5 3 1.300 4 3 4 3-3 0-3.500 3-2 6 2 4 7 5 11.500 2.500C19.500 22 16 24 12 24 5 24 0 19 0 12z" fill="url(#edgeB)" />
        </Svg>
      </TaskItem>
      <TaskItem label="Chrome">
        <Svg w={24} h={24} stroke="none">
          <circle cx="12" cy="12" r="12" fill="#fbc116" />
          <path d="M1.600 6A12 12 0 0 1 22.400 6H12L7 15z" fill="#e33b2e" />
          <path d="M1.600 6A12 12 0 0 0 12 24l5.200-9H7z" fill="#22994a" />
          <circle cx="12" cy="12" r="6" fill="#fff" /><circle cx="12" cy="12" r="4.700" fill="#2b7de9" />
        </Svg>
      </TaskItem>
      <TaskItem label="Whale">
        <Svg w={24} h={24} stroke="none">
          <circle cx="12.500" cy="12" r="11" fill="#dcebec" />
          <path d="M2.500 6Q6 0 13 .500q6 .5 8.500 6-3.500 3-8.500 3-6 0-10.500-3.500z" fill="#16216f" />
          <path d="M2 6.500q4 3.500 8.500 4 3 .2 4.500-.5-1 2 .5 3.500-1 5-5.500 7.500-3.500 2-8.500 1.500 3-1.500 2.500-3.500Q-.500 13 2 6.500z" fill="#12c5ad" />
          <path d="M21.500 6.500q-3 3-6 3.500-1 3 1.500 3 4-1 4.500-6.500z" fill="#f4fafa" />
          <circle cx="11.500" cy="12" r=".9" fill="#16216f" />
        </Svg>
      </TaskItem>
      <TaskItem label="파일 탐색기">
        <Svg w={24} h={22} stroke="none">
          <path d="M0 1q0-1 1-1h7l2.500 3H23q1 0 1 1v8H0z" fill="#dfa10c" /><path d="M0 5h9l2-2h12q1 0 1 1v17H0z" fill="#fdcf4a" />
          <path d="M4 21v-4q0-2 2-2h11q2 0 2 2v4z" fill="#1576cc" /><path d="M7 18h9" stroke="#0c5fae" strokeWidth="1.500" />
        </Svg>
      </TaskItem>
      <button type="button" className="ml-[3px] flex h-[39px] w-[71px] flex-col rounded border border-[#eadfd8] bg-[#fbf7f5] px-[6px] pt-[6px]">
        <span className="flex items-center gap-2 text-xs text-[#222]"><CellLogo /><span className="pt-[2px]">통합</span></span>
        <span className="ml-1 mt-1 h-[3px] w-4 rounded-full bg-[#0a74d6]" />
      </button>
    </div>
    <div className="flex flex-1 items-center justify-end pr-5 text-[#222]">
      <ToolButton label="숨겨진 아이콘" className="w-8"><Svg w={10} h={6} stroke="#222"><path d="m.500 5.500 4.500-4.500 4.500 4.500" strokeWidth="1.400" /></Svg></ToolButton>
      <ToolButton label="Bluetooth" className="w-8">
        <Svg w={12} h={16} stroke="none"><rect width="12" height="16" rx="5" fill="#0a84ff" /><path d="M3 5l6 5.500L6 13V3l3 2.500L3 11" stroke="#fff" fill="none" /></Svg>
      </ToolButton>
      <ToolButton label="USB" className="w-8">
        <Svg w={13} h={16} stroke="#222"><path d="M2.500 5.500v-5h6v5M1 5.500h9v5M1 5.500v10h5" strokeWidth="1.200" /><path d="M4.500 2v1M6.500 2v1" /><path d="m7 13 2 2 4-4" /></Svg>
      </ToolButton>
      <ToolButton label="입력 언어" className="w-8"><Svg w={12} h={16} stroke="#333"><path d="M.500 15.500 6 .800l5.500 14.700M2.300 10.500h7.400" strokeWidth="1.200" /></Svg></ToolButton>
      <ToolButton label="네트워크" className="w-7">
        <Svg w={16} h={16} stroke="#222"><path d="M10 1.500H.500v10h13V8M4 14.500h6M7 11.500v3" strokeWidth="1.200" /><path d="M11.500.500h4v5h-4zM13.500 5.500v4" strokeWidth="1.200" /></Svg>
      </ToolButton>
      <ToolButton label="볼륨" className="w-6">
        <Svg w={17} h={14} stroke="#222"><path d="M.500 5h3l4-3.500v11l-4-3.500h-3zM9.500 5q1.500 2 0 4M11.500 3q3 4 0 8M13.500 1.500q4.500 5.500 0 11" strokeWidth="1.100" /></Svg>
      </ToolButton>
      <div className="ml-4 text-right text-xs/[16px]">
        <div>오후 9:02</div>
        <div>2024-01-12 금요일</div>
      </div>
      <ToolButton label="알림" className="ml-[9px] w-[14px]"><Svg w={13} h={14} stroke="#222"><path d="M.700 10.500 2 8V5.500Q2 .700 6.500.700T11 5.500V8l1.300 2.500zM4.500 11q.5 2 2 2t2-2" strokeWidth="1.200" /></Svg></ToolButton>
    </div>
  </div>
);

const Dot = ({ cx }) => <circle cx={cx} cy="12" r="2.800" fill="#83c41a" stroke="none" />;

const VmStatus = () => (
  <footer className="flex h-[21px] shrink-0 items-center bg-[#e3e4e6] pb-[2px] pl-[2px] text-[13px]/[18px]">
    <p className="flex-1">이 VM에 직접 입력하려면 마우스 포인터를 VM으로 이동하거나 Ctrl+G를 누르십시오.</p>
    <div className="flex items-center gap-[6px]">
      <Svg w={16} h={15} stroke="#888"><path d="M.500 12.500v-4l3-7h9l3 7v4zM.500 8.500h15" strokeWidth="1.200" /><Dot cx={12.5} /></Svg>
      <Svg w={15} h={15} stroke="#c2c2c2"><circle cx="7.500" cy="7.500" r="6.500" /><circle cx="7.500" cy="7.500" r="2" /><path d="M4 5l2 1M11 10l-2-1" /></Svg>
      <Svg w={15} h={15} stroke="#888"><path d="M.500 1.500h8v5h-8zM6.500 4.500h8v5h-8z" strokeWidth="1.100" /><path d="M.500 7v7h10" strokeDasharray="1 1" /><Dot cx={12} /></Svg>
      <Svg w={14} h={15} stroke="#888"><path d="M.500 5.500h3l4-4v12l-4-4h-3zM9.500 4v6M11.500 3q2 4 0 8" /><Dot cx={11} /></Svg>
      <Divider className="mx-[2px] h-4 bg-[#aaa]" />
      <Svg w={15} h={15} stroke="#777"><path d="M.500.500h14v9l-4.500 4.500H.500zM14.500 9.500H10v4.500" /></Svg>
      <Svg w={18} h={15} stroke="#999"><path d="M6 15 17 4M10 15l7-7M14 15l3-3" strokeWidth="1.300" /></Svg>
    </div>
  </footer>
);

export default function App() {
  return (
    <div className="flex h-screen flex-col overflow-hidden bg-[#f0f0f0] font-['Open_Sans','Noto_Sans_CJK_KR',sans-serif] text-black">
      <TitleBar />
      <VmToolbar />
      <div className="ml-px mr-[2px] flex min-h-0 flex-1 flex-col border-b border-l border-[#5f6164]">
        <VmTabs />
        <main className="flex min-h-0 flex-1 flex-col bg-[#fafafa]">
          <AppTitle />
          <MenuBar />
          <Ribbon />
          <FormatBar />
          <FormulaBar />
          <div className="flex min-h-0 flex-1 bg-[#f4f4f4]">
            <Sheet />
            <VerticalScroll />
          </div>
          <SheetTabs />
          <StatusBar />
        </main>
        <Taskbar />
      </div>
      <VmStatus />
    </div>
  );
}
